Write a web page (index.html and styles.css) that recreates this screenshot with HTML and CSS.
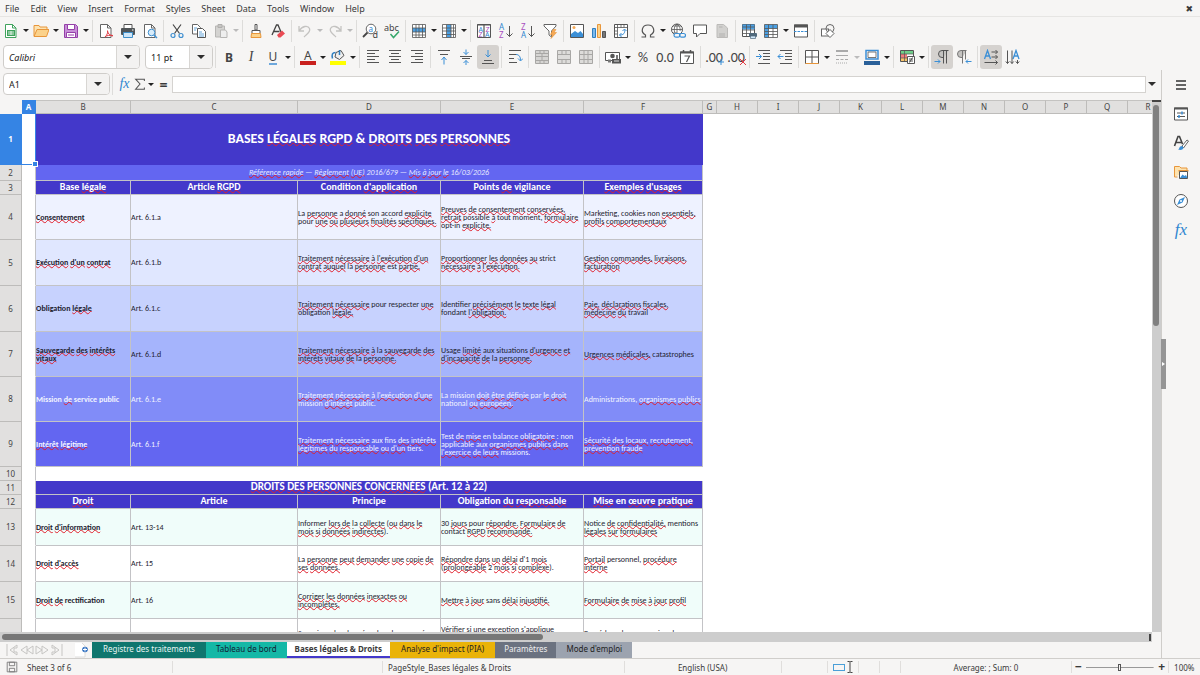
FILE: index.html
```html
<!DOCTYPE html>
<html lang="fr">
<head>
<meta charset="utf-8">
<title>Bases légales &amp; Droits</title>
<link rel="stylesheet" href="styles.css">
</head>
<body>
<svg class="defs" aria-hidden="true">
  <symbol id="i-new" viewBox="0 0 16 16"><path d="M2.500 1.500h7l3.500 3.500v9.500H2.500z" fill="#fff" stroke="#3fa35c"/><path d="M9.500 1.500v3.500H13" fill="none" stroke="#3fa35c"/><path d="M4 7h8v6H4z" fill="#3fa35c"/><path d="M5 9h6M5 11h6M8 8v4" stroke="#fff" stroke-width=".8"/></symbol>
  <symbol id="i-open" viewBox="0 0 16 16"><path d="M1 13V2.500h5l1 1.500h7v3" fill="#fde3b0" stroke="#e8963a"/><path d="M1 13.500 4 6.500h12l-2.500 7z" fill="#fbd28b" stroke="#e8963a"/></symbol>
  <symbol id="i-save" viewBox="0 0 16 16"><path d="M1.500 1.500h11l2 2v11h-13z" fill="#c88fd8" stroke="#9540a8"/><path d="M4.500 1.500h7v5h-7zM3.500 9.500h9v5h-9z" fill="#fff" stroke="#9540a8"/><path d="M5 12h6" stroke="#9540a8"/></symbol>
  <symbol id="i-pdf" viewBox="0 0 16 16"><path d="M2.500 1.500h7l3.500 3.500v9.500H2.500z" fill="#fff" stroke="#666"/><path d="M9.500 1.500v3.500H13" fill="none" stroke="#666"/><path d="M7 14c2-2 3-4 2.500-6.500M9.500 8c.5 3 2.500 4.500 5.500 4.500M7 14c2-2 5-2 8-1" fill="none" stroke="#e03c44"/></symbol>
  <symbol id="i-print" viewBox="0 0 16 16"><path d="M4 5V1.500h8V5" fill="#fff" stroke="#555"/><rect x="1" y="5" width="14" height="7" rx="1" fill="#505558"/><path d="M3.500 9.500h9v5h-9z" fill="#cfe6f8" stroke="#3f8fc8"/><path d="M12 7h1.500" stroke="#fff"/></symbol>
  <symbol id="i-preview" viewBox="0 0 16 16"><path d="M2.500 1.500h7l3.500 3.500v9.500H2.500z" fill="#fff" stroke="#666"/><path d="M9.500 1.500v3.500H13" fill="none" stroke="#666"/><circle cx="9.500" cy="9.500" r="3.300" fill="#d8ecfa" stroke="#3f8fd0"/><path d="m12 12 3 3" stroke="#3f8fd0" stroke-width="1.500"/></symbol>
  <symbol id="i-cut" viewBox="0 0 16 16"><path d="m4 1.500 6.500 9M12 1.500l-6.500 9" stroke="#444" stroke-width="1.200" fill="none"/><circle cx="4" cy="12.500" r="2" fill="none" stroke="#3f8fd0" stroke-width="1.200"/><circle cx="12" cy="12.500" r="2" fill="none" stroke="#3f8fd0" stroke-width="1.200"/></symbol>
  <symbol id="i-copy" viewBox="0 0 16 16"><path d="M1.500 1.500h5l3 3v6.500h-8z" fill="#fff" stroke="#666"/><path d="M6.500 5.500h5l3 3v6h-8z" fill="#fff" stroke="#555"/><path d="M3 5h3M3 7h2M8 9h3M8 11h5M8 13h5" stroke="#3f8fd0" stroke-width=".8"/></symbol>
  <symbol id="i-paste" viewBox="0 0 16 16"><path d="M2.500 3h9v11h-9z" fill="#d4d3d1" stroke="#b7b6b4"/><path d="M5 1.500h4v3H5z" fill="#c6c5c3" stroke="#b0afad"/><path d="M7.500 7h5l1.500 2v5.500H7.500z" fill="#eee" stroke="#b7b6b4"/></symbol>
  <symbol id="i-brush" viewBox="0 0 16 16"><path d="M7 1.500h2v5.500H7zM4 7.500h8v3H4z" fill="#fff" stroke="#555"/><path d="M3.500 10.500h9l.5 4H3z" fill="#fbd28b" stroke="#e8963a"/></symbol>
  <symbol id="i-clear" viewBox="0 0 16 16"><path d="M2 12 6.500 2h1.500l3 7M4 8.500h5.500" fill="none" stroke="#444" stroke-width="1.300"/><path d="m7 12 5-4.500 3 3-4.500 4H8.500z" fill="#ea4b54"/></symbol>
  <symbol id="i-undo" viewBox="0 0 16 16"><path d="M2 3v5h5M2.500 7.500C5 3 11 2 12.500 5.500 14 9 10 11 7 14" fill="none" stroke="#c4c3c1" stroke-width="1.300"/></symbol>
  <symbol id="i-redo" viewBox="0 0 16 16"><path d="M14 3v5H9M13.500 7.500C11 3 5 2 3.500 5.500 2 9 6 11 9 14" fill="none" stroke="#c4c3c1" stroke-width="1.300"/></symbol>
  <symbol id="i-rows" viewBox="0 0 16 16"><path d="M1.500 1.500h13v13h-13z" fill="#fff"/><path d="M1.500 5h13v4h-13z" fill="#4aa0e4"/><path d="M1.500 1.500h13v13h-13zM1.500 5h13M1.500 9h13M1.500 12h13M5 1.500v13M8 1.500v13M11.500 1.500v13" fill="none" stroke="#555" stroke-width=".8"/></symbol>
  <symbol id="i-cols" viewBox="0 0 16 16"><path d="M1.500 1.500h13v13h-13z" fill="#fff"/><path d="M6 1.500h4v13H6z" fill="#4aa0e4"/><path d="M1.500 1.500h13v13h-13zM1.500 5h13M1.500 8h13M1.500 11.500h13M5.500 1.500v13M10 1.500v13M12.500 1.500v13" fill="none" stroke="#555" stroke-width=".8"/></symbol>
  <symbol id="i-filter" viewBox="0 0 16 16"><path d="M2 1.500h12v1.500L9.500 8v6L7 12V8L2 3z" fill="#fff" stroke="#666"/><path d="m11 6.500-2.500 5h2L9 15.500l5.500-6h-2.500l2-3z" fill="#f6a955" stroke="#e8963a" stroke-width=".6"/></symbol>
  <symbol id="i-image" viewBox="0 0 16 16"><path d="M1.500 1.500h13v13h-13z" fill="#fff" stroke="#555"/><path d="M2 14v-3l4-3 3 2 2.500-2L14 11v3z" fill="#3b8fd6"/><circle cx="5" cy="4.500" r="1.500" fill="#f6a955"/></symbol>
  <symbol id="i-chart" viewBox="0 0 16 16"><path d="M1.500 5.500h3v9h-3z" fill="#7db9ec" stroke="#2f7fc0"/><path d="M6.500 1.500h3v13h-3z" fill="#fbd28b" stroke="#e8963a"/><path d="M11.500 8.500h3v6h-3z" fill="#777" stroke="#555"/></symbol>
  <symbol id="i-pivot" viewBox="0 0 16 16"><path d="M1.500 1.500h13v13h-13z" fill="#fff" stroke="#555"/><path d="M1.500 4.500h13M4.500 1.500v13M8 1.500v3M11 1.500v3M1.500 8h3M1.500 11h3" stroke="#555" stroke-width=".8"/><path d="M11.500 6.500c1 3-1 6-5 5.500M9.500 8l2-2 2 2M8.500 10l-2 2 2 2" fill="none" stroke="#3b8fd6"/></symbol>
  <symbol id="i-omega" viewBox="0 0 16 16"><path d="M1.500 14h4v-2C0 9 2 2 8 2s8 7 2.500 10v2h4" fill="none" stroke="#555" stroke-width="1.200"/></symbol>
  <symbol id="i-link" viewBox="0 0 16 16"><circle cx="7" cy="6.500" r="5.500" fill="#fff" stroke="#555"/><path d="M1.500 6.500h11M7 1v10M3 3h8M3 10h4M7 1C3 4 4 9 6 11.500M7 1c3 2.500 3.500 5 3 7" fill="none" stroke="#555" stroke-width=".8"/><rect x="4" y="10.500" width="6" height="3.600" rx="1.800" fill="#f6f5f4" stroke="#3b8fd6" stroke-width="1.200"/><rect x="9.500" y="10.500" width="6" height="3.600" rx="1.800" fill="none" stroke="#3b8fd6" stroke-width="1.200"/></symbol>
  <symbol id="i-comment" viewBox="0 0 16 16"><path d="M1.500 2h13v8.500H8L4.500 14v-3.500h-3z" fill="#fff" stroke="#555"/></symbol>
  <symbol id="i-header" viewBox="0 0 16 16"><path d="M3 1.500h6.500L13.500 5v9.500H3z" fill="#d2d1cf" stroke="#bcbbb9"/><path d="M5 4h3.500M5 11h6M5 13h6" stroke="#b3b2b0"/></symbol>
  <symbol id="i-parea" viewBox="0 0 16 16"><path d="M1.500 1.500h12v12h-12z" fill="#fff" stroke="#555"/><path d="M1.500 1.500h12v5h-12z" fill="#4aa0e4"/><path d="M1.500 4h12M1.500 7h12M1.500 10.500h12M5.500 1.500v12M9.500 1.500v12" stroke="#555" stroke-width=".8"/><rect x="8" y="10" width="8" height="4" rx="1" fill="#50697c"/><path d="M9.500 13h5v2.500h-5z" fill="#cfe6f8" stroke="#50697c" stroke-width=".7"/></symbol>
  <symbol id="i-freeze" viewBox="0 0 16 16"><path d="M1.500 1.500h13v13h-13z" fill="#fff"/><path d="M1.500 1.500h13v4h-13zM1.500 1.500h4v13h-4z" fill="#4aa0e4"/><path d="M1.500 1.500h13v13h-13zM5.500 1.500v13M10 1.500v13M1.500 5.500h13M1.500 8.500h13M1.500 11.500h13" fill="none" stroke="#555" stroke-width=".8"/></symbol>
  <symbol id="i-split" viewBox="0 0 16 16"><path d="M1.500 2h13v12h-13z" fill="#fff" stroke="#555"/><path d="M1 3h14" stroke="#555" stroke-width="3"/><path d="M1 8.500h14" stroke="#3b8fd6" stroke-dasharray="2.500 1"/></symbol>
  <symbol id="i-shapes" viewBox="0 0 16 16"><rect x="1.500" y="6" width="7" height="7" fill="#fff" stroke="#666"/><circle cx="10" cy="5.500" r="4" fill="none" stroke="#666"/><path d="m10 6.500 4 4-4 4-4-4z" fill="#fff" stroke="#666"/></symbol>
  <symbol id="i-fill" viewBox="0 0 16 16"><path d="m6 3.500 5-2 3 5-4.500 4L5 8z" fill="#eee" stroke="#555"/><path d="M9.500 6V1M2.500 9.500C1.500 5 2.500 3.500 5.500 3.500" fill="none" stroke="#2f7fc0" stroke-width="1.500"/><path d="M0 12h16v4H0z" fill="#ffff00"/></symbol>
  <symbol id="i-left" viewBox="0 0 16 16"><path d="M2 1.500h12M2 4.500h8M2 7.500h12M2 10.500h8M2 13.500h12" stroke="#555"/></symbol>
  <symbol id="i-center" viewBox="0 0 16 16"><path d="M2 1.500h12M4 4.500h8M2 7.500h12M4 10.500h8M2 13.500h12" stroke="#555"/></symbol>
  <symbol id="i-right" viewBox="0 0 16 16"><path d="M2 1.500h12M6 4.500h8M2 7.500h12M6 10.500h8M2 13.500h12" stroke="#555"/></symbol>
  <symbol id="i-top" viewBox="0 0 16 16"><path d="M2 1.500h12M4 5.500h8" stroke="#555"/><path d="M8 15.500V8m-2.500 3L8 8l2.500 3" fill="none" stroke="#3b8fd6"/></symbol>
  <symbol id="i-mid" viewBox="0 0 16 16"><path d="M2 7.500h12M4 9.500h8" stroke="#555"/><path d="M8 .500v5M5.500 3 8 5.500 10.500 3M8 16V11.500M5.500 14 8 11.500l2.500 2.500" fill="none" stroke="#3b8fd6"/></symbol>
  <symbol id="i-bottom" viewBox="0 0 16 16"><path d="M4 11.500h8M2 14.500h12" stroke="#555"/><path d="M8 1v7M5.500 5.500 8 8l2.500-2.500" fill="none" stroke="#3b8fd6"/></symbol>
  <symbol id="i-wrap" viewBox="0 0 16 16"><path d="M2 1.500h12M2 5.500h7M2 9.500h5M2 13.500h8" stroke="#555"/><path d="M9 5.500c3 0 4.500 2 4.500 6m-2.500-2 2.500 2.500 2.500-2.500" fill="none" stroke="#3b8fd6"/></symbol>
  <symbol id="i-merge1" viewBox="0 0 16 16"><path d="M1.500 1.500h13v13h-13z" fill="#d6d5d3" stroke="#a8a7a5"/><path d="M1.500 4.500h13M1.500 7.500h13M1.500 11.500h13M6 1.500v3M10 1.500v3M6 11.500v3M10 11.500v3M8 4.500v7" stroke="#a8a7a5"/></symbol>
  <symbol id="i-merge2" viewBox="0 0 16 16"><path d="M1.500 1.500h13v13h-13z" fill="#dddcda" stroke="#a8a7a5"/><path d="M1.500 5.500h13M1.500 10.500h13M6 1.500v4M10 1.500v4M6 10.500v4M10 10.500v4" stroke="#a8a7a5"/></symbol>
  <symbol id="i-merge3" viewBox="0 0 16 16"><path d="M1.500 1.500h13v13h-13z" fill="#dddcda" stroke="#a8a7a5"/><path d="M1.500 5.500h13M1.500 10.500h13M6 1.500v13M10 1.500v13" stroke="#a8a7a5"/></symbol>
  <symbol id="i-money" viewBox="0 0 16 16"><path d="M.5 3.500h14v8H.5z" fill="#fff" stroke="#555"/><circle cx="7.500" cy="7" r="2.300" fill="#555"/><path d="M7 10h9v4.500H7z" fill="#555"/><path d="M3 10.500h3v3H3zM11 6h2v4h-2z" fill="#777"/><path d="M9 12h5" stroke="#ddd"/></symbol>
  <symbol id="i-date" viewBox="0 0 16 16"><path d="M1.500 3h13v11.500h-13z" fill="#fff" stroke="#555"/><path d="M1 3.500h14" stroke="#555" stroke-width="2"/><path d="M4.500 1v3M11.500 1v3" stroke="#555" stroke-width="1.500"/><path d="M5.500 7h5l-3 6" fill="none" stroke="#555" stroke-width="1.200"/></symbol>
  <symbol id="i-indent" viewBox="0 0 16 16"><path d="M3 1.500h12M8 4.500h7M8 7.500h7M8 10.500h7M3 14.500h12" stroke="#555"/><path d="M1 7.500h5.500M4 5l2.500 2.500L4 10" fill="none" stroke="#3b8fd6"/></symbol>
  <symbol id="i-outdent" viewBox="0 0 16 16"><path d="M3 1.500h12M8 4.500h7M8 7.500h7M8 10.500h7M3 14.500h12" stroke="#555"/><path d="M6.500 7.500H1M3.500 5 1 7.500 3.500 10" fill="none" stroke="#3b8fd6"/></symbol>
  <symbol id="i-borders" viewBox="0 0 16 16"><path d="M1.500 1.500h13v13h-13zM8 1.500v13M1.500 8h13" fill="#fff" stroke="#555"/><path d="M1.500 14.500h13" stroke="#e8963a"/></symbol>
  <symbol id="i-lines" viewBox="0 0 16 16"><path d="M2 2h12" stroke="#aaa" stroke-width="2"/><path d="M2 6.500h12" stroke="#aaa"/><path d="M2 10.500h12" stroke="#aaa" stroke-dasharray="3 1.500"/><path d="M2 14h12" stroke="#aaa" stroke-dasharray="1 1"/></symbol>
  <symbol id="i-bcolor" viewBox="0 0 16 16"><path d="M2 1.500h12v8.500H2z" fill="#fff" stroke="#3b8fd6" stroke-width="1.500"/><path d="M4 3h8v5.500H4z" fill="#fff" stroke="#555" stroke-width=".8"/><path d="M0 12h16v4H0z" fill="#2a6099"/></symbol>
  <symbol id="i-cond" viewBox="0 0 16 16"><path d="M1.500 1.500h13v11h-13z" fill="#fff" stroke="#555"/><path d="M2 2h12v3H2z" fill="#6fcf8a"/><path d="M2 5h6v4H2z" fill="#f07c7c"/><path d="M2 9h6v3H2z" fill="#f6c26a"/><path d="M1.500 5h13M1.500 9h13M5.500 1.500v11" stroke="#555" stroke-width=".7"/><path d="M8.500 7.500h7v7h-7z" fill="#fff" stroke="#555"/><path d="M10 10h4M10 12h4M13.500 8.500l-3 5" stroke="#444" stroke-width=".9"/></symbol>
  <symbol id="i-ltr" viewBox="0 0 16 16"><path d="M14.500 1.500H8a3.500 3.500 0 0 0 0 7h1.500z" fill="#c4c3c1"/><path d="M14.500 1.500H8a3.500 3.500 0 0 0 0 7h1.500M9.500 1.500v13M12.500 1.500v13" fill="none" stroke="#555"/><path d="M.5 12.500H6M4 10.500l2 2-2 2" fill="none" stroke="#3b8fd6"/></symbol>
  <symbol id="i-rtl" viewBox="0 0 16 16"><path d="M10.500 1.500H5a3.500 3.500 0 0 0 0 7h1.500z" fill="#c4c3c1"/><path d="M10.500 1.500H5a3.500 3.500 0 0 0 0 7h1.500M6.500 1.500v13M9.500 1.500v9" fill="none" stroke="#777"/><path d="M15.500 12.500H10M12 10.500l-2 2 2 2" fill="none" stroke="#3b8fd6"/></symbol>
  <symbol id="i-horiz" viewBox="0 0 16 16"><path d="m1.500 10 3-8.500L7.500 10M2.500 7h4" fill="none" stroke="#3b8fd6" stroke-width="1.300"/><path d="M8.500 3h6M8.500 8h6M1.500 13.500h13M12.500 1l2 2-2 2M12.500 6l2 2-2 2M12.500 11.500l2 2-2 2" fill="none" stroke="#555"/></symbol>
  <symbol id="i-vert" viewBox="0 0 16 16"><path d="m8 10 3-8.500L14 10M9 7h4" fill="none" stroke="#3b8fd6" stroke-width="1.300"/><path d="M2.500 1.500v13M7 1.500v13M12.500 11v3.500M.8 12.500l1.700 2 1.700-2M5.300 12.500l1.700 2 1.700-2M10.800 12.500l1.700 2 1.700-2" fill="none" stroke="#555"/></symbol>
  <symbol id="i-sigma" viewBox="0 0 16 16"><path d="M13 4.500V2.500H3l5 5.500-5 6h10v-2" fill="none" stroke="#555" stroke-width="1.200"/></symbol>
  <symbol id="i-menu" viewBox="0 0 16 16"><path d="M3 4h10M3 8h10M3 12h10" stroke="#333" stroke-width="1.300"/></symbol>
  <symbol id="i-props" viewBox="0 0 16 16"><path d="M1.500 2h13v12h-13z" fill="#fff" stroke="#555"/><path d="M1 2.500h14" stroke="#555" stroke-width="2"/><path d="M4 7h8M4 10.500h8" stroke="#555"/><path d="M9 5.500v3M6 9v3" stroke="#3b8fd6" stroke-width="1.500"/></symbol>
  <symbol id="i-styles" viewBox="0 0 16 16"><path d="M1.500 11 5 1.500h1.500L9.500 9M3 7.500h5.500" fill="none" stroke="#444" stroke-width="1.600"/><path d="m9 11 5-6 1.500 1-5 7z" fill="#fff" stroke="#666"/><path d="M5 14.500c1.500 0 1-3.500 4-3.500l1.500 1.500c0 2-2.500 3-5.500 2z" fill="#3b8fd6"/></symbol>
  <symbol id="i-gallery" viewBox="0 0 16 16"><path d="M1.500 13V2.500h5L8 4h6v3M1.500 13h3" fill="#fde3b0" stroke="#e8963a"/><path d="M5.500 7.500h10V6h-10z" fill="#e8963a"/><path d="M6.500 7.500h8v7h-8z" fill="#fff" stroke="#555"/><path d="m7 14 2.500-3.500 2 1.500L13 11l1.500 3z" fill="#3b8fd6"/></symbol>
  <symbol id="i-nav" viewBox="0 0 16 16"><circle cx="8" cy="8" r="6.500" fill="#fff" stroke="#555"/><path d="m12 4-2.500 5.500L4 12l2.500-5.500z" fill="#3b8fd6"/><circle cx="8" cy="8" r="1" fill="#fff"/></symbol>
  <symbol id="i-disk" viewBox="0 0 16 16"><path d="M2.500 2.500h11v11h-11zM5 2.500h6v4H5zM5 9.500h6v4H5z" fill="none" stroke="#777"/></symbol>
  <symbol id="i-add" viewBox="0 0 16 16"><path d="M0 1h7l3 3v11H0z" fill="#fff"/><path d="M0 15h10V4L7 1" fill="none" stroke="#dddcda"/><circle cx="10" cy="7.500" r="2.800" fill="#2f6fc0"/><path d="M10 5.500v4M8 7.500h4" stroke="#fff"/></symbol>
</svg>

<nav class="menubar">
  <button>File</button><button>Edit</button><button>View</button><button>Insert</button><button>Format</button><button>Styles</button><button>Sheet</button><button>Data</button><button>Tools</button><button>Window</button><button>Help</button>
  <button class="close" aria-label="Close">✖</button>
</nav>

<div class="toolbar">
  <button class="tb" aria-label="New"><svg><use href="#i-new"/></svg></button><button class="dd" aria-label="New options"></button>
  <button class="tb" aria-label="Open"><svg><use href="#i-open"/></svg></button><button class="dd" aria-label="Open options"></button>
  <button class="tb" aria-label="Save"><svg><use href="#i-save"/></svg></button><button class="dd" aria-label="Save options"></button>
  <span class="sep"></span>
  <button class="tb" aria-label="Export PDF"><svg><use href="#i-pdf"/></svg></button>
  <button class="tb" aria-label="Print"><svg><use href="#i-print"/></svg></button>
  <button class="tb" aria-label="Preview"><svg><use href="#i-preview"/></svg></button>
  <span class="sep"></span>
  <button class="tb" aria-label="Cut"><svg><use href="#i-cut"/></svg></button>
  <button class="tb" aria-label="Copy"><svg><use href="#i-copy"/></svg></button>
  <button class="tb" aria-label="Paste"><svg><use href="#i-paste"/></svg></button><button class="dd off" aria-label="Paste options"></button>
  <span class="sep"></span>
  <button class="tb" aria-label="Clone"><svg><use href="#i-brush"/></svg></button>
  <button class="tb" aria-label="Clear"><svg><use href="#i-clear"/></svg></button>
  <span class="sep"></span>
  <button class="tb" aria-label="Undo"><svg><use href="#i-undo"/></svg></button><button class="dd off" aria-label="Undo options"></button>
  <button class="tb" aria-label="Redo"><svg><use href="#i-redo"/></svg></button><button class="dd off" aria-label="Redo options"></button>
  <span class="sep"></span>
  <button class="tb" aria-label="Find"><svg viewBox="0 0 16 16"><circle cx="9" cy="6" r="4.800" fill="#fff" stroke="#666"/><path d="M5.500 9.500 1 14" stroke="#444" stroke-width="1.800"/><text x="6.500" y="8.500" class="gl blue" font-size="8">a</text><text x="10.500" y="15" class="gl" font-size="9">d</text></svg></button>
  <button class="tb" aria-label="Spelling"><svg viewBox="0 0 16 16"><text x="0" y="7.500" class="gl" font-size="9">abc</text><path d="m6.500 11 3 3.500 5.500-6" fill="none" stroke="#35a86b" stroke-width="1.500"/></svg></button>
  <span class="sep"></span>
  <button class="tb" aria-label="Row"><svg><use href="#i-rows"/></svg></button><button class="dd" aria-label="Row options"></button>
  <button class="tb" aria-label="Column"><svg><use href="#i-cols"/></svg></button><button class="dd" aria-label="Column options"></button>
  <span class="sep"></span>
  <button class="tb" aria-label="Sort"><svg viewBox="0 0 16 16"><path d="M1.500 1.500h13v13h-13z" fill="#fff" stroke="#555"/><path d="M1 2h14M8 2v12" stroke="#555" stroke-width="1.200"/><text x="2.500" y="8.500" class="gl blue" font-size="7">A</text><text x="2.500" y="14" class="gl purple" font-size="7">Z</text><text x="9.500" y="8.500" class="gl purple" font-size="7">Z</text><text x="9" y="14" class="gl blue" font-size="7">A</text></svg></button>
  <button class="tb" aria-label="Sort ascending"><svg viewBox="0 0 16 16"><text x="1" y="7" class="gl blue" font-size="8">A</text><text x="1" y="15" class="gl purple" font-size="8">Z</text><path d="M11.500 3v10.500m-3-3 3 3 3-3" fill="none" stroke="#555"/></svg></button>
  <button class="tb" aria-label="Sort descending"><svg viewBox="0 0 16 16"><text x="1" y="7" class="gl purple" font-size="8">Z</text><text x="1" y="15" class="gl blue" font-size="8">A</text><path d="M11.500 3v10.500m-3-3 3 3 3-3" fill="none" stroke="#555"/></svg></button>
  <button class="tb" aria-label="AutoFilter"><svg><use href="#i-filter"/></svg></button>
  <span class="sep"></span>
  <button class="tb" aria-label="Image"><svg><use href="#i-image"/></svg></button>
  <button class="tb" aria-label="Chart"><svg><use href="#i-chart"/></svg></button>
  <button class="tb" aria-label="Pivot table"><svg><use href="#i-pivot"/></svg></button>
  <span class="sep"></span>
  <button class="tb" aria-label="Special character"><svg><use href="#i-omega"/></svg></button><button class="dd" aria-label="Character options"></button>
  <button class="tb" aria-label="Hyperlink"><svg><use href="#i-link"/></svg></button>
  <button class="tb" aria-label="Comment"><svg><use href="#i-comment"/></svg></button>
  <button class="tb" aria-label="Headers and footers"><svg><use href="#i-header"/></svg></button>
  <span class="sep"></span>
  <button class="tb" aria-label="Print area"><svg><use href="#i-parea"/></svg></button>
  <button class="tb" aria-label="Freeze"><svg><use href="#i-freeze"/></svg></button><button class="dd" aria-label="Freeze options"></button>
  <button class="tb" aria-label="Split"><svg><use href="#i-split"/></svg></button>
  <span class="sep"></span>
  <button class="tb" aria-label="Draw functions"><svg><use href="#i-shapes"/></svg></button>
</div>

<div class="toolbar format">
  <div class="combo font"><input value="Calibri" aria-label="Font name"><button aria-label="Fonts"></button></div>
  <div class="combo size"><input value="11 pt" aria-label="Font size"><button aria-label="Sizes"></button></div>
  <span class="sep"></span>
  <button class="tb glyph b">B</button>
  <button class="tb glyph i">I</button>
  <button class="tb glyph u"><span>U</span></button><button class="dd" aria-label="Underline options"></button>
  <span class="sep"></span>
  <button class="tb" aria-label="Font color"><svg viewBox="0 0 16 16"><text x="4" y="10.500" class="gl" font-size="12">A</text><path d="M0 12h16v4H0z" fill="#c9211e"/></svg></button><button class="dd" aria-label="Font colors"></button>
  <button class="tb" aria-label="Background"><svg><use href="#i-fill"/></svg></button><button class="dd" aria-label="Background colors"></button>
  <span class="sep"></span>
  <button class="tb" aria-label="Left"><svg><use href="#i-left"/></svg></button>
  <button class="tb" aria-label="Center"><svg><use href="#i-center"/></svg></button>
  <button class="tb" aria-label="Right"><svg><use href="#i-right"/></svg></button>
  <span class="sep"></span>
  <button class="tb" aria-label="Top"><svg><use href="#i-top"/></svg></button>
  <button class="tb" aria-label="Middle"><svg><use href="#i-mid"/></svg></button>
  <button class="tb on" aria-label="Bottom"><svg><use href="#i-bottom"/></svg></button>
  <span class="sep"></span>
  <button class="tb" aria-label="Wrap text"><svg><use href="#i-wrap"/></svg></button>
  <span class="sep"></span>
  <button class="tb" aria-label="Merge and center"><svg><use href="#i-merge1"/></svg></button>
  <button class="tb" aria-label="Merge"><svg><use href="#i-merge2"/></svg></button>
  <button class="tb" aria-label="Unmerge"><svg><use href="#i-merge3"/></svg></button>
  <span class="sep"></span>
  <button class="tb" aria-label="Currency"><svg><use href="#i-money"/></svg></button><button class="dd" aria-label="Currencies"></button>
  <button class="tb glyph num">%</button>
  <button class="tb glyph num">0.0</button>
  <button class="tb" aria-label="Date"><svg><use href="#i-date"/></svg></button>
  <span class="sep"></span>
  <button class="tb glyph num" aria-label="Add decimal place">.00<svg class="mark" viewBox="0 0 6 6"><path d="M3 0v6M0 3h6" stroke="#3b8fd6"/></svg></button>
  <button class="tb glyph num" aria-label="Delete decimal place">.00<svg class="mark" viewBox="0 0 6 6"><path d="m0 0 6 6M6 0 0 6" stroke="#e03c44"/></svg></button>
  <span class="sep"></span>
  <button class="tb" aria-label="Indent"><svg><use href="#i-indent"/></svg></button>
  <button class="tb" aria-label="Outdent"><svg><use href="#i-outdent"/></svg></button>
  <span class="sep"></span>
  <button class="tb" aria-label="Borders"><svg><use href="#i-borders"/></svg></button><button class="dd" aria-label="Border options"></button>
  <button class="tb" aria-label="Border style"><svg><use href="#i-lines"/></svg></button><button class="dd off" aria-label="Border styles"></button>
  <button class="tb" aria-label="Border color"><svg><use href="#i-bcolor"/></svg></button><button class="dd" aria-label="Border colors"></button>
  <span class="sep"></span>
  <button class="tb" aria-label="Conditional"><svg><use href="#i-cond"/></svg></button><button class="dd" aria-label="Conditional options"></button>
  <span class="sep"></span>
  <button class="tb on" aria-label="Left to right"><svg><use href="#i-ltr"/></svg></button>
  <button class="tb" aria-label="Right to left"><svg><use href="#i-rtl"/></svg></button>
  <span class="sep"></span>
  <button class="tb on" aria-label="Horizontal text"><svg><use href="#i-horiz"/></svg></button>
  <button class="tb" aria-label="Vertical text"><svg><use href="#i-vert"/></svg></button>
</div>

<main class="main">
  <section class="work">
    <div class="formula">
      <div class="combo name"><input value="A1" aria-label="Name box"><button aria-label="Names"></button></div>
      <span class="sep"></span>
      <button class="fb fx" aria-label="Function wizard">fx</button>
      <button class="fb" aria-label="Sum"><svg><use href="#i-sigma"/></svg></button><button class="dd" aria-label="Sum options"></button>
      <button class="fb eq" aria-label="Formula">=</button>
      <input class="entry" aria-label="Formula input">
      <button class="expand" aria-label="Expand"></button>
    </div>

    <div class="sheetwrap">
      <div class="sheet">
        <table>
          <colgroup><col class="w-h"><col class="w-s"><col class="w-b"><col class="w-c"><col class="w-d"><col class="w-d"><col class="w-f"><col class="w-s"><col class="w-n"><col class="w-n"><col class="w-n"><col class="w-k"><col class="w-n"><col class="w-n"><col class="w-n"><col class="w-n"><col class="w-n"><col class="w-n"><col class="w-n"></colgroup>
          <thead><tr><th class="corner"></th><th class="sel">A</th><th>B</th><th>C</th><th>D</th><th>E</th><th>F</th><th>G</th><th>H</th><th>I</th><th>J</th><th>K</th><th>L</th><th>M</th><th>N</th><th>O</th><th>P</th><th>Q</th><th>R</th></tr></thead>
          <tbody>
            <tr class="h51 title"><th class="sel">1</th><td class="cur"><span class="handle"></span></td><td colspan="5">BASES <u>LÉGALES</u> <u>RGPD</u> &amp; <u>DROITS</u> <u>DES</u> <u>PERSONNES</u></td></tr>
            <tr class="h16 sub"><th>2</th><td class="a"></td><td colspan="5"><u>Référence</u> <u>rapide</u> — <u>Règlement</u> <u>(UE)</u> 2016/679 — <u>Mis</u> <u>à</u> <u>jour</u> <u>le</u> 16/03/2026</td></tr>
            <tr class="h14 head"><th>3</th><td class="a"></td><td>Base <u>légale</u></td><td>Article <u>RGPD</u></td><td>Condition <u>d'application</u></td><td>Points <u>de</u> vigilance</td><td><u>Exemples</u> <u>d'usages</u></td></tr>
            <tr class="h45 c1"><th>4</th><td class="a"></td><td><u>Consentement</u></td><td>Art. 6.1.a</td><td>La <u>personne</u> a <u>donné</u> son accord <u>explicite</u><br>pour <u>une</u> <u>ou</u> <u>plusieurs</u> <u>finalités</u> <u>spécifiques.</u></td><td><u>Preuves</u> <u>de</u> <u>consentement</u> <u>conservées,</u><br><u>retrait</u> possible <u>à</u> tout moment, <u>formulaire</u><br>opt-in <u>explicite.</u></td><td>Marketing, cookies non <u>essentiels,</u><br><u>profils</u> <u>comportementaux</u></td></tr>
            <tr class="h46 c2"><th>5</th><td class="a"></td><td><u>Exécution</u> <u>d'un</u> <u>contrat</u></td><td>Art. 6.1.b</td><td><u>Traitement</u> <u>nécessaire</u> <u>à</u> <u>l'exécution</u> <u>d'un</u><br><u>contrat</u> <u>auquel</u> la <u>personne</u> est <u>partie.</u></td><td><u>Proportionner</u> <u>les</u> <u>données</u> <u>au</u> strict<br><u>nécessaire</u> <u>à</u> <u>l'exécution.</u></td><td><u>Gestion</u> <u>commandes,</u> <u>livraisons,</u><br><u>facturation</u></td></tr>
            <tr class="h46 c3"><th>6</th><td class="a"></td><td>Obligation <u>légale</u></td><td>Art. 6.1.c</td><td><u>Traitement</u> <u>nécessaire</u> pour respecter <u>une</u><br>obligation <u>légale.</u></td><td>Identifier <u>précisément</u> <u>le</u> <u>texte</u> <u>légal</u><br>fondant <u>l'obligation.</u></td><td><u>Paie,</u> <u>déclarations</u> <u>fiscales,</u><br><u>médecine</u> <u>du</u> travail</td></tr>
            <tr class="h45 c4"><th>7</th><td class="a"></td><td><u>Sauvegarde</u> <u>des</u> <u>intérêts</u><br><u>vitaux</u></td><td>Art. 6.1.d</td><td><u>Traitement</u> <u>nécessaire</u> <u>à</u> la <u>sauvegarde</u> <u>des</u><br><u>intérêts</u> <u>vitaux</u> <u>de</u> la <u>personne.</u></td><td>Usage <u>limité</u> aux situations <u>d'urgence</u> <u>et</u><br><u>d'incapacité</u> <u>de</u> la <u>personne.</u></td><td><u>Urgences</u> <u>médicales,</u> catastrophes</td></tr>
            <tr class="h45 c5"><th>8</th><td class="a"></td><td>Mission <u>de</u> service public</td><td>Art. 6.1.e</td><td><u>Traitement</u> <u>nécessaire</u> <u>à</u> <u>l'exécution</u> <u>d'une</u><br>mission <u>d'intérêt</u> public.</td><td>La mission <u>doit</u> <u>être</u> <u>définie</u> par <u>le</u> <u>droit</u><br>national <u>ou</u> <u>européen.</u></td><td>Administrations, <u>organismes</u> <u>publics</u></td></tr>
            <tr class="h45 c6"><th>9</th><td class="a"></td><td><u>Intérêt</u> <u>légitime</u></td><td>Art. 6.1.f</td><td><u>Traitement</u> <u>nécessaire</u> aux fins <u>des</u> <u>intérêts</u><br><u>légitimes</u> <u>du</u> <u>responsable</u> <u>ou</u> <u>d'un</u> tiers.</td><td>Test <u>de</u> <u>mise</u> en balance <u>obligatoire</u> : non<br>applicable aux <u>organismes</u> <u>publics</u> <u>dans</u><br><u>l'exercice</u> <u>de</u> <u>leurs</u> missions.</td><td><u>Sécurité</u> <u>des</u> <u>locaux,</u> <u>recrutement,</u><br><u>prévention</u> <u>fraude</u></td></tr>
            <tr class="h14"><th>10</th><td class="a"></td><td class="blank" colspan="5"></td></tr>
            <tr class="h14 head section"><th>11</th><td class="a"></td><td colspan="5"><u>DROITS</u> <u>DES</u> <u>PERSONNES</u> <u>CONCERNÉES</u> (Art. 12 <u>à</u> 22)</td></tr>
            <tr class="h14 head"><th>12</th><td class="a"></td><td><u>Droit</u></td><td>Article</td><td>Principe</td><td>Obligation <u>du</u> <u>responsable</u></td><td><u>Mise</u> en <u>œuvre</u> <u>pratique</u></td></tr>
            <tr class="h37 mint"><th>13</th><td class="a"></td><td><u>Droit</u> <u>d'information</u></td><td>Art. 13-14</td><td>Informer <u>lors</u> <u>de</u> la <u>collecte</u> (<u>ou</u> <u>dans</u> <u>le</u><br><u>mois</u> <u>si</u> <u>données</u> <u>indirectes</u>).</td><td>30 <u>jours</u> pour <u>répondre.</u> <u>Formulaire</u> <u>de</u><br>contact <u>RGPD</u> <u>recommandé.</u></td><td>Notice <u>de</u> <u>confidentialité,</u> mentions<br><u>légales</u> <u>sur</u> <u>formulaires</u></td></tr>
            <tr class="h36 plain"><th>14</th><td class="a"></td><td><u>Droit</u> <u>d'accès</u></td><td>Art. 15</td><td>La <u>personne</u> <u>peut</u> <u>demander</u> <u>une</u> <u>copie</u> <u>de</u><br><u>ses</u> <u>données.</u></td><td><u>Répondre</u> <u>dans</u> <u>un</u> <u>délai</u> d'1 <u>mois</u><br>(<u>prolongeable</u> 2 <u>mois</u> <u>si</u> <u>complexe</u>).</td><td><u>Portail</u> personnel, <u>procédure</u><br><u>interne</u></td></tr>
            <tr class="h37 mint"><th>15</th><td class="a"></td><td><u>Droit</u> <u>de</u> rectification</td><td>Art. 16</td><td><u>Corriger</u> <u>les</u> <u>données</u> <u>inexactes</u> <u>ou</u><br><u>incomplètes.</u></td><td><u>Mettre</u> <u>à</u> <u>jour</u> sans <u>délai</u> <u>injustifié.</u></td><td><u>Formulaire</u> <u>de</u> <u>mise</u> <u>à</u> <u>jour</u> <u>profil</u></td></tr>
            <tr class="h37 plain"><th></th><td class="a"></td><td></td><td></td><td><u>Supprimer</u> <u>les</u> <u>données</u> <u>dans</u> <u>les</u> <u>cas</u> <u>prévus</u><br>&nbsp;</td><td><u>Vérifier</u> <u>si</u> <u>une</u> exception <u>s'applique</u><br>&nbsp;<br>&nbsp;</td><td><u>Procédure</u> <u>de</u> <u>suppression</u> <u>de</u><br>&nbsp;</td></tr>
          </tbody>
        </table>
      </div>
      <div class="vscroll"><div class="vthumb"></div></div>
    </div>
    <div class="hscroll"><div class="hthumb"></div><div class="hend"></div></div>

    <div class="tabs">
      <div class="tabnav">
        <button aria-label="First sheet"><svg viewBox="0 0 14 14"><path d="M2 1v12M12 2 5 7l7 5V9H9V5h3z"/></svg></button>
        <button aria-label="Previous sheet"><svg viewBox="0 0 14 14"><path d="M7 3 1 7l6 4zM13 3 7 7l6 4z"/></svg></button>
        <button aria-label="Next sheet"><svg viewBox="0 0 14 14"><path d="m1 3 6 4-6 4zM7 3l6 4-6 4z"/></svg></button>
        <button aria-label="Last sheet"><svg viewBox="0 0 14 14"><path d="M12 1v12M2 2l7 5-7 5V9h3V5H2z"/></svg></button>
      </div>
      <button class="add" aria-label="Add sheet"><svg><use href="#i-add"/></svg></button>
      <button class="tab t1">Registre des traitements</button>
      <button class="tab t2">Tableau de bord</button>
      <button class="tab t3">Bases légales &amp; Droits</button>
      <button class="tab t4">Analyse d'impact (PIA)</button>
      <button class="tab t5">Paramètres</button>
      <button class="tab t6">Mode d'emploi</button>
    </div>
  </section>

  <aside class="side">
    <button class="grip" aria-label="Collapse sidebar"></button>
    <button aria-label="Settings"><svg><use href="#i-menu"/></svg></button>
    <button aria-label="Properties"><svg><use href="#i-props"/></svg></button>
    <button aria-label="Styles"><svg><use href="#i-styles"/></svg></button>
    <button aria-label="Gallery"><svg><use href="#i-gallery"/></svg></button>
    <button aria-label="Navigator"><svg><use href="#i-nav"/></svg></button>
    <button class="fx" aria-label="Functions">fx</button>
  </aside>
</main>

<footer class="status">
  <div class="s1"><svg><use href="#i-disk"/></svg>Sheet 3 of 6</div>
  <div class="s2"></div>
  <div class="s3">PageStyle_Bases légales &amp; Droits</div>
  <div class="s4">English (USA)</div>
  <div class="s5"></div>
  <div class="s6"><span class="mode"></span><svg viewBox="0 0 6 12"><path d="M.5.500h2l.5.500.500-.500h2M3 1v10M.5 11.500h2L3 11l.5.500h2" fill="none" stroke="#444"/></svg></div>
  <div class="s7"></div>
  <div class="s7"></div>
  <div class="s8">Average: ; Sum: 0</div>
  <div class="s9"><button class="zb">−</button><input type="range" aria-label="Zoom" value="50"><button class="zb">+</button></div>
  <div class="s10">100%</div>
</footer>
</body>
</html>
```
FILE: styles.css
```css
* { box-sizing: border-box; }

body {
  margin: 0;
  height: 100vh;
  display: flex;
  flex-direction: column;
  overflow: hidden;
  background: #f6f5f4;
  color: #3a3a3a;
  font-family: "Noto Sans", sans-serif;
  font-size: 8px;
}

button, input { font: inherit; color: inherit; margin: 0; padding: 0; border: 0; background: none; }
button { flex: none; }
svg { display: block; width: 16px; height: 16px; flex: none; }
.defs { position: absolute; width: 0; height: 0; }
.gl { font-family: "Noto Sans", sans-serif; fill: #444; }
.gl.blue { fill: #2f86d0; }
.gl.purple { fill: #a94fc0; }

/* Menu bar */
.menubar { flex: none; display: flex; align-items: center; height: 17px; padding: 1px 7px 0 5px; gap: 11px; font-size: 9px; border-bottom: 1px solid #e6e5e3; }
.menubar button { line-height: 16px; }
.menubar .close { margin-left: auto; font-family: "DejaVu Sans", sans-serif; font-size: 9px; }

/* Toolbars */
.toolbar { flex: none; display: flex; align-items: center; height: 27px; }
.tb { width: 22px; height: 24px; display: flex; align-items: center; justify-content: center; border-radius: 3px; position: relative; }
.tb.on { background: #d5d2cf; }
.dd { width: 8px; height: 24px; display: flex; align-items: center; justify-content: center; }
.dd::before { content: ""; border: 3px solid transparent; border-top: 3px solid #222; border-bottom: 0; }
.dd.off::before { border-top-color: #bbb; }
.sep { flex: none; width: 5px; height: 22px; background: linear-gradient(#dddcda, #dddcda) center / 1px 100% no-repeat; }
.glyph { font-family: "Liberation Serif", serif; font-size: 14px; color: #444; }
.glyph.b { font-family: "Noto Sans", sans-serif; font-size: 12px; font-weight: bold; }
.glyph.i { font-style: italic; }
.glyph.u { font-family: "Noto Sans", sans-serif; font-size: 12px; }
.glyph.u span { line-height: 13px; border-bottom: 2px solid #6ea8dc; }
.glyph.num { font-family: Carlito, "Open Sans", sans-serif; font-size: 14px; }
.mark { position: absolute; right: 1px; bottom: 4px; width: 6px; height: 6px; }

.format { height: 26px; }
.combo { flex: none; display: flex; height: 24px; border: 1px solid #cfcdca; border-radius: 4px; background: #fff; overflow: hidden; }
.combo input { flex: 1; min-width: 0; padding-left: 5px; font-size: 9px; color: #222; }
.combo button { width: 23px; background: #f3f2f1; border-left: 1px solid #d8d6d3; display: flex; align-items: center; justify-content: center; }
.combo button::before, .expand::before { content: ""; border: 4px solid transparent; border-top: 4px solid #2e2e2e; border-bottom: 0; }
.combo.font { width: 137px; margin: 0 5px 0 3px; }
.combo.font input { font-style: italic; }
.combo.size { width: 68px; }

/* Formula bar */
.main { flex: 1; min-height: 0; display: flex; }
.work { flex: 1; min-width: 0; display: flex; flex-direction: column; }
.formula { flex: none; display: flex; align-items: center; height: 30px; padding: 0 0 2px 3px; }
.combo.name { width: 107px; height: 22px; }
.formula .sep { margin-right: 2px; }
.fb { width: 15px; height: 22px; display: flex; align-items: center; justify-content: center; }
.fb svg { width: 14px; height: 14px; }
.fx { font-family: "Liberation Serif", serif; font-style: italic; font-size: 14px; color: #2f86d0; }
.eq { width: 17px; font-size: 14px; font-weight: bold; }
.entry { flex: 1; min-width: 0; height: 17px; border: 1px solid #d5d3d0; background: #fff; }
.expand { width: 15px; height: 20px; padding-left: 2px; }
.expand::before { display: block; width: 0; }

/* Sheet */
.sheetwrap { flex: 1; min-height: 0; display: flex; }
.sheet { flex: 1; min-width: 0; overflow: hidden; background: #fff; }
table { width: 100%; table-layout: fixed; border-collapse: separate; border-spacing: 0; }
.w-h { width: 22px; }
.w-s { width: 14px; }
.w-b { width: 95px; }
.w-c { width: 167px; }
.w-d { width: 143px; }
.w-f { width: 119px; }
.w-n { width: 41px; }
.w-k { width: 42px; }
th { height: 14px; padding: 0; background: #e1e0df; border-right: 1px solid #bdbcba; border-bottom: 1px solid #bdbcba; font-size: 8px; line-height: 10px; font-weight: normal; color: #444; text-align: center; }
thead th { border-top: 1px solid #c4c3c1; }
.corner { background: #f6f5f4; border-color: transparent; }
th.sel { background: #3584e4; border-color: #3584e4; color: #fff; font-weight: bold; }
td { padding: 0 0 1px; font-family: Carlito, Lato, sans-serif; font-size: 8px; line-height: 8px; color: #1e2330; white-space: nowrap; overflow: hidden; border-right: 1px solid #c3c3c6; border-bottom: 1px solid #c3c3c6; }
td:nth-child(3) { font-weight: bold; }
u { text-decoration: underline wavy #e0202c 1px; text-underline-offset: -1px; text-decoration-skip-ink: none; }
.h51 { height: 51px; }
.h46 { height: 46px; }
.h45 { height: 45px; }
.h37 { height: 37px; }
.h36 { height: 36px; }
.h16 { height: 16px; }
.h14 { height: 14px; }
.title td { background: #4338ca; color: #fff; font-size: 14px; line-height: 18px; text-align: center; border-color: #4338ca; }
.title .cur { position: relative; overflow: visible; background: #fff; border-right-color: #3584e4; border-bottom: 1px solid #3584e4; }
.handle { position: absolute; right: -2px; bottom: -2px; width: 4px; height: 4px; background: #3584e4; outline: 1px solid #fff; }
.sub td { background: #6366f1; color: #e6e8ff; text-align: center; }
.sub td:nth-child(3) { font-weight: normal; font-style: italic; }
.head td { background: #4338ca; color: #fff; font-weight: bold; font-size: 10px; line-height: 12px; text-align: center; }
.section td { font-size: 11px; }
.c1 td { background: #eef2ff; }
.c2 td { background: #e0e7ff; }
.c3 td { background: #c7d2fe; }
.c4 td { background: #a5b4fc; }
.c5 td { background: #818cf8; color: #f2f4ff; }
.c6 td { background: #6366f1; color: #f2f4ff; }
.mint td { background: #f0fdfa; }
tr td.a { background: #fff; border-bottom-color: transparent; }
td.blank { border-color: transparent; }

/* Scroll bars */
.vscroll { flex: none; width: 9px; background: #cdcdcd; border-top: 2px solid #444; padding: 3px 2px 0 1px; }
.vthumb { height: 42%; background: #808080; border-radius: 3px; }
.hscroll { flex: none; display: flex; align-items: center; height: 10px; margin-right: 9px; background: #cdcdcd; }
.hthumb { width: 47%; height: 6px; margin-left: 2px; background: #777; border-radius: 3px; }
.hend { width: 2px; height: 7px; margin: 0 1px 0 auto; background: #444; }

/* Sheet tabs */
.tabs { flex: none; display: flex; height: 16px; }
.tabnav { display: flex; align-items: center; width: 68px; padding-left: 5px; gap: 1px; }
.tabnav svg { width: 14px; height: 14px; fill: none; stroke: #c6c5c3; }
.add { width: 24px; padding-left: 7px; }
.tab { padding: 0 11px; line-height: 14px; border-bottom: 2px solid; }
.t1 { background: #0f766e; border-color: #0f766e; color: #e8f5f3; }
.t2 { padding: 0 10px; background: #14b8a6; border-color: #14b8a6; color: #123; }
.t3 { padding: 0 8px; background: #fff; font-weight: bold; border-color: #4338ca; }
.t4 { background: #eab308; border-color: #eab308; color: #222; }
.t5 { padding: 0 9px; background: #6b7280; border-color: #6b7280; color: #f0f0f0; }
.t6 { padding: 0 10px; background: #9ca3af; border-color: #9ca3af; color: #222; }

/* Sidebar */
.side { flex: none; width: 39px; position: relative; display: flex; flex-direction: column; align-items: center; border-left: 1px solid #cfcdca; }
.side button { width: 24px; height: 29px; display: flex; align-items: center; justify-content: center; }
.side .fx { font-size: 17px; }
.side .grip { position: absolute; left: -1px; top: 269px; width: 5px; height: 50px; background: #959595; }
.grip::before { content: ""; border: 2px solid transparent; border-left: 3px solid #fff; border-right: 0; }

/* Status bar */
.status { flex: none; display: flex; height: 17px; border-top: 1px solid #d0cecb; }
.status > div { min-width: 0; display: flex; align-items: center; justify-content: center; margin: 2px 0; border-right: 1px solid #e0dedc; white-space: nowrap; }
.status > .s1 { flex: 170; justify-content: flex-start; padding-left: 5px; gap: 8px; }
.s1 svg { width: 14px; height: 14px; }
.s2 { flex: 213; }
.status > .s3 { flex: 240; justify-content: flex-start; padding-left: 5px; }
.s4 { flex: 159; }
.s5 { flex: 46; }
.s6 { flex: 31; gap: 2px; }
.s6 svg { width: 6px; height: 12px; }
.mode { width: 12px; height: 7px; border: 1px solid #4a9fd8; }
.s7 { flex: 20; }
.s8 { flex: 174; }
.s9 { flex: 97; gap: 2px; }
.status > .s10 { flex: 32; border: 0; }
.zb { width: 12px; font-size: 12px; line-height: 12px; font-weight: bold; }
.s9 input { appearance: none; flex: 1; min-width: 0; height: 10px; background: linear-gradient(#999, #999) center / 100% 1px no-repeat; }
.s9 input::-webkit-slider-thumb { appearance: none; width: 3px; height: 7px; background: #f6f5f4; border: 1px solid #555; }
```
